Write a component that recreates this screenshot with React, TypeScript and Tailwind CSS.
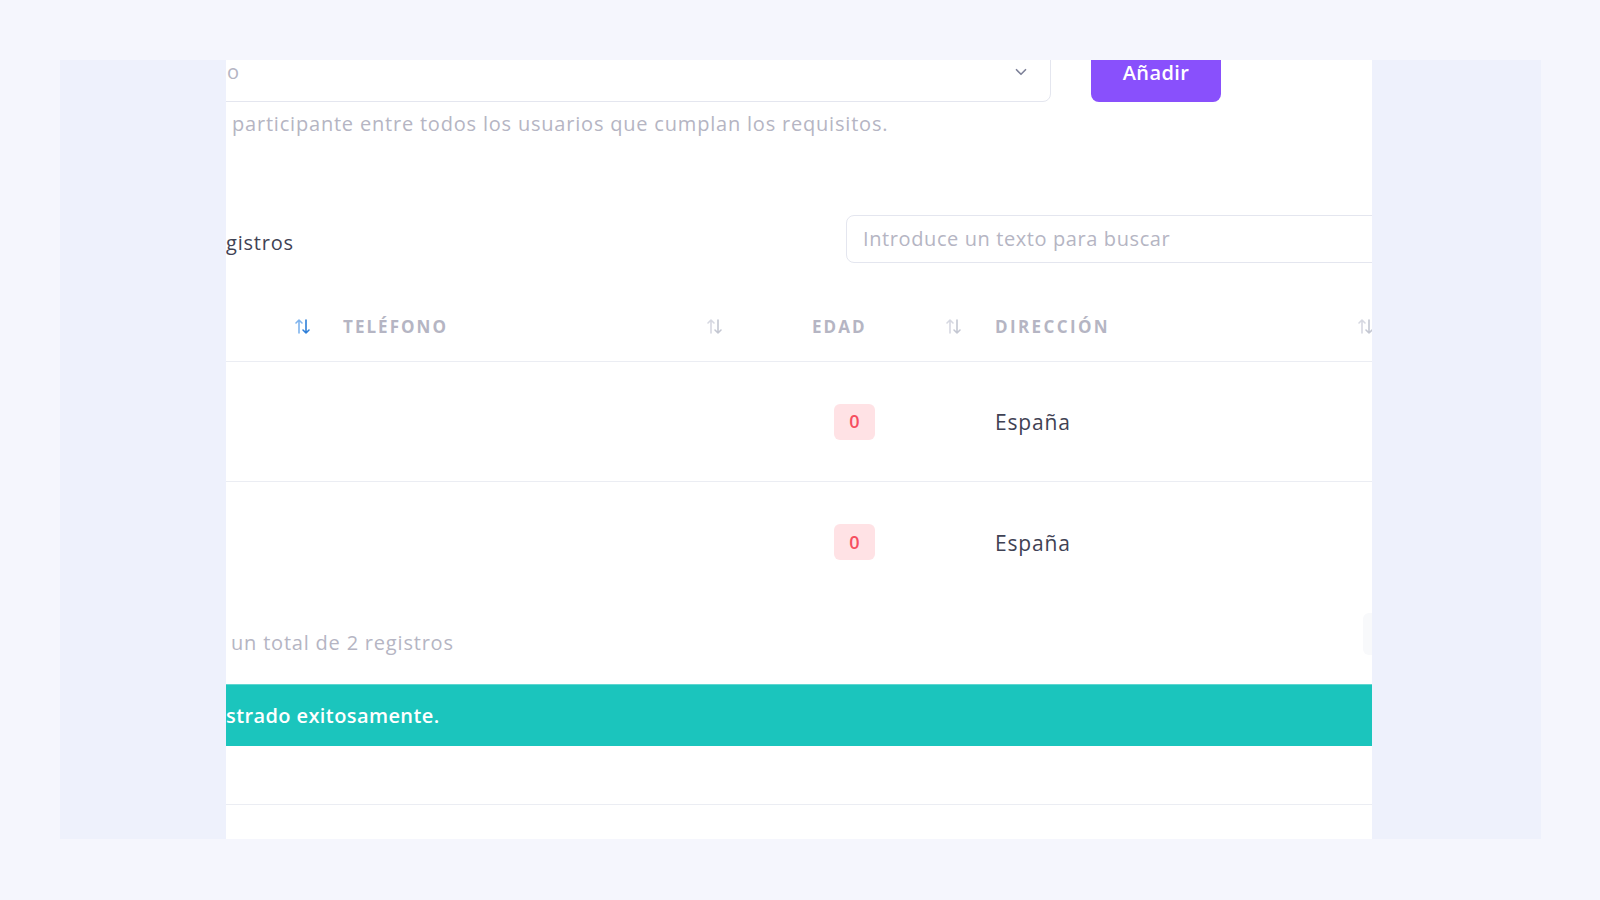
import { ChevronDown } from "lucide-react";

function SortIcon({ active = false }: { active?: boolean }) {
    const up = active ? "#7fb4ee" : "#d6d8e1";
    const down = active ? "#2f7fd8" : "#c4c7d2";
    return (
        <svg width="17" height="17" viewBox="0 0 17 17" fill="none" strokeWidth="1.6" strokeLinecap="round" strokeLinejoin="round">
            <path d="M5 15V2M2 5l3-3 3 3" stroke={up} />
            <path d="M12 2v13M9 12l3 3 3-3" stroke={down} />
        </svg>
    );
}

// text whose start is cut off by the panel edge
function Clipped({ hidden, shown }: { hidden: string; shown: string }) {
    return (
        <div className="flex whitespace-pre">
            <div className="w-0 flex justify-end">{hidden}</div>
            <span>{shown}</span>
        </div>
    );
}

const rows = [
    { edad: 0, direccion: "España" },
    { edad: 0, direccion: "España" },
];

export default function App() {
    return (
        <div className="w-full h-[900px] bg-[#f5f6fd] pt-[60px] font-['Open_Sans',sans-serif]">
            <div className="ml-[60px] w-[1481px] h-[779px] bg-[#eef1fc] flex">
                <div className="ml-[166px] w-[1146px] h-full bg-white overflow-hidden flex flex-col">
                    {/* select + add button */}
                    <div className="-mt-[18px] h-[60px] flex shrink-0">
                        <div className="-ml-[300px] w-[1125px] shrink-0 h-full border border-[#e4e6ef] rounded-lg flex items-center justify-between pr-[20px] text-[20px] tracking-[0.04em] text-[#b5b5c3]">
                            <div className="ml-[300px]">
                                <Clipped hidden="Seleccione un participante aleatori" shown="o" />
                            </div>
                            <ChevronDown className="w-[18px] h-[18px] text-[#7e8299]" strokeWidth={2.2} />
                        </div>
                        <button className="ml-[40px] w-[130px] shrink-0 h-full pt-[2px] bg-[#8950fc] rounded-lg text-white text-[20px] font-semibold tracking-[0.02em]">
                            Añadir
                        </button>
                    </div>

                    <div className="mt-[8px] ml-[6px] h-[28px] leading-[28px] text-[20px] tracking-[0.04em] text-[#b5b5c3] whitespace-nowrap">
                        participante entre todos los usuarios que cumplan los requisitos.
                    </div>

                    {/* length + search */}
                    <div className="mt-[77px] h-[48px] flex items-center shrink-0">
                        <div className="w-[620px] shrink-0 pt-[8px] text-[20px] tracking-[0.04em] text-[#3f4254]">
                            <Clipped hidden="Mostrar 10 re" shown="gistros" />
                        </div>
                        <div className="w-[640px] shrink-0 h-full border border-[#e4e6ef] rounded-lg flex items-center pl-[16px] text-[20px] tracking-[0.03em] text-[#b5b5c3]">
                            Introduce un texto para buscar
                        </div>
                    </div>

                    {/* table header */}
                    <div className="mt-[29px] h-[70px] flex items-center border-b border-[#ebedf3] shrink-0 text-[17px] font-bold tracking-[0.12em] text-[#b5b5c3]">
                        <div className="w-[100px] shrink-0 flex justify-end pr-[15px]">
                            <SortIcon active />
                        </div>
                        <div className="w-[411px] shrink-0 flex items-center justify-between pl-[17px] pr-[14px]">
                            <span>TELÉFONO</span>
                            <SortIcon />
                        </div>
                        <div className="w-[245px] shrink-0 flex items-center justify-between pl-[75px] pr-[20px]">
                            <span>EDAD</span>
                            <SortIcon />
                        </div>
                        <div className="w-[400px] shrink-0 flex items-center justify-between pl-[13px] pr-[8px]">
                            <span className="tracking-[0.14em]">DIRECCIÓN</span>
                            <SortIcon />
                        </div>
                    </div>

                    {/* rows */}
                    {rows.map((r, i) => (
                        <div
                            key={i}
                            className={`h-[120px] flex items-center shrink-0 ${i < rows.length - 1 ? "border-b border-[#ebedf3]" : ""}`}
                        >
                            <div className="w-[511px] shrink-0" />
                            <div className="w-[245px] shrink-0 pl-[97px]">
                                <span className="w-[41px] h-[36px] rounded-md bg-[#ffe2e5] text-[#f64e60] text-[18px] font-semibold flex items-center justify-center">
                                    {r.edad}
                                </span>
                            </div>
                            <div className="pl-[13px] pt-[3px] text-[21px] tracking-[0.04em] text-[#3f4254]">{r.direccion}</div>
                        </div>
                    ))}

                    {/* footer */}
                    <div className="mt-[11px] w-[1177px] h-[42px] flex items-center justify-between shrink-0">
                        <div className="ml-[5px] mt-[18px] text-[20px] tracking-[0.04em] text-[#b5b5c3]">
                            <Clipped hidden="Mostrando registros del 1 al 2 de " shown="un total de 2 registros" />
                        </div>
                        <div className="w-[40px] h-[42px] rounded-md bg-[#f8f9fb]" />
                    </div>

                    {/* alert */}
                    <div className="mt-[29px] h-[62px] bg-[#1bc5bd] border-t border-[#5ed6d0] flex items-center shrink-0 text-[20px] font-semibold tracking-[0.02em] text-white">
                        <Clipped hidden="Participante regi" shown="strado exitosamente." />
                    </div>

                    <div className="mt-[58px] border-b border-[#ebedf3]" />
                </div>
            </div>
        </div>
    );
}
